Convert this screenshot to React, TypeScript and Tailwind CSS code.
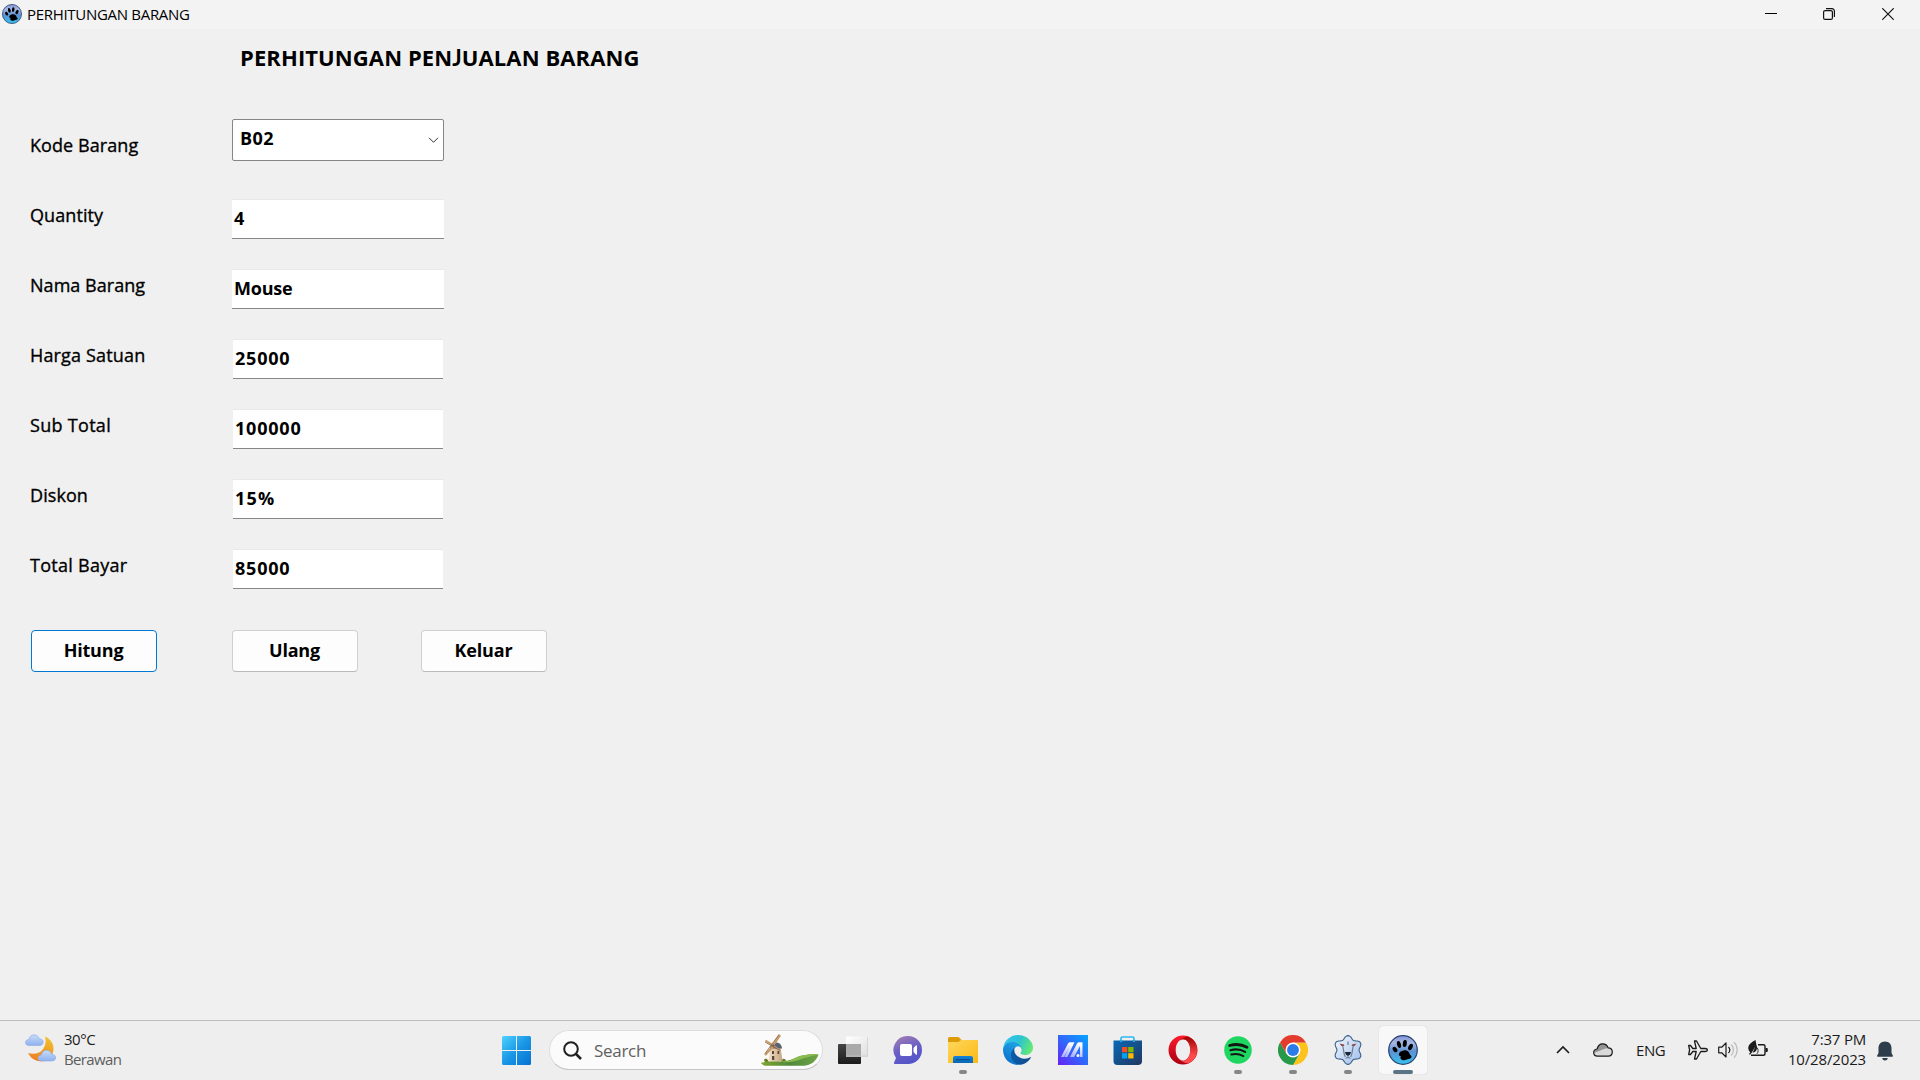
import React from "react";

const WeatherIcon = () => (
  <svg width="32" height="30" viewBox="0 0 32 30">
    <defs>
      <linearGradient id="moon" x1="0.7" y1="0" x2="0.3" y2="1">
        <stop offset="0" stopColor="#f0c02f" />
        <stop offset="1" stopColor="#f07d1f" />
      </linearGradient>
      <linearGradient id="cloud" x1="0" y1="0" x2="0" y2="1">
        <stop offset="0" stopColor="#c9dcfa" />
        <stop offset="1" stopColor="#8fb1ee" />
      </linearGradient>
    </defs>
    <path d="M20 2.500c6 2.500 9.300 8 8.400 14-1 7-7 11.300-13.500 10.800C9.800 27 5.300 23.800 3.200 19c5.500 1.800 11.300.6 14.500-3.500 3.100-3.900 3.600-8.700 2.300-13z" fill="url(#moon)" />
    <path d="M4 11.500C1.800 11.500.5 10.300.5 8.500S2 5.600 3.800 5.500C4.500 2.300 6.500.8 9 .8c2.600 0 4.500 1.500 5.200 4 2.400 0 4 1.300 4 3.300 0 2.200-1.600 3.400-4 3.400z" fill="url(#cloud)" stroke="#86a8e8" strokeWidth=".6" />
    <path d="M16.500 27c-2.200 0-3.500-1.200-3.500-3s1.500-2.900 3.200-3c.8-3.100 2.700-4.700 5.300-4.700 2.700 0 4.500 1.500 5.200 4 2.400 0 4 1.300 4 3.300 0 2.200-1.600 3.400-4 3.400z" fill="url(#cloud)" stroke="#86a8e8" strokeWidth=".6" />
  </svg>
);

const StartIcon = () => (
  <svg width="29" height="29" viewBox="0 0 29 29">
    <defs>
      <linearGradient id="win" gradientUnits="userSpaceOnUse" x1="0" y1="0" x2="29" y2="29">
        <stop offset="0" stopColor="#4fd2ff" />
        <stop offset="0.5" stopColor="#1997e6" />
        <stop offset="1" stopColor="#0671d2" />
      </linearGradient>
    </defs>
    <path d="M1.500 0H14v14H0V1.500A1.500 1.500 0 0 1 1.500 0zM15 0h12.500A1.500 1.500 0 0 1 29 1.500V14H15zM0 15h14v14H1.500A1.500 1.500 0 0 1 0 27.500zM15 15h14v12.500a1.500 1.500 0 0 1-1.500 1.500H15z" fill="url(#win)" />
  </svg>
);

const Windmill = () => (
  <svg width="58" height="32" viewBox="0 0 58 32">
    <defs>
      <linearGradient id="hill" x1="0" y1="0" x2="1" y2="0">
        <stop offset="0" stopColor="#7fa52f" />
        <stop offset="0.5" stopColor="#4f8a3c" />
        <stop offset="1" stopColor="#6fa544" />
      </linearGradient>
      <linearGradient id="tower" x1="0" y1="0" x2="1" y2="0">
        <stop offset="0" stopColor="#f5e3c8" />
        <stop offset="1" stopColor="#c3a480" />
      </linearGradient>
    </defs>
    <path d="M4 28c-2-3 0-4 2-3l2 3M20 28c0-3 4-5 5-1" fill="#657c1c" />
    <path d="M0 29c5-1.500 12-2 20-1.500 8 .3 13-3.500 20-5.700 6-1.700 12-2 17.500-1.300-2 6-7 10.700-14 11.200H4C2 31.500 1 30 0 29z" fill="url(#hill)" />
    <path d="M20 28c9 0 14-4.500 20-6.200 6-1.700 12-2 17.500-1.300-6 1.500-12 2.500-18 5-5 2-12 3-19.500 2.500z" fill="#8bbb4d" />
    <path d="M9.500 13h10L21.500 27.300H7.300z" fill="url(#tower)" />
    <path d="M9 14.500c.4-3.800 2.800-6 6-6 3.300 0 5.700 2 6 6z" fill="#5a6472" />
    <path d="M11 17h2v3h-2zM16.500 17h1.700v3h-1.700zM11 22h2.300v4H11z" fill="#5b4838" />
    <g stroke="#c79a6c" strokeWidth="2.400">
      <path d="M12.500 10.500 19 1" />
      <path d="M12 12.500 4 21" />
      <path d="M11.500 11 4.500 6.500" strokeWidth="2" />
      <path d="m13 12 6.500 4.500" strokeWidth="1.200" />
    </g>
    <path d="M4 19.500 18 .5M4 8l15 8.500" stroke="#8d6038" strokeWidth=".8" />
  </svg>
);

const TaskViewIcon = () => (
  <svg width="30" height="29" viewBox="0 0 30 29">
    <defs>
      <linearGradient id="tvd" x1="0" y1="0" x2="0" y2="1">
        <stop offset="0" stopColor="#444" /><stop offset="1" stopColor="#1b1b1b" />
      </linearGradient>
      <linearGradient id="tvl" x1="0" y1="0" x2="1" y2="1">
        <stop offset="0" stopColor="#fff" /><stop offset="1" stopColor="#dedede" />
      </linearGradient>
    </defs>
    <rect x="0" y="8" width="23" height="20" rx="1" fill="url(#tvd)" />
    <rect x="8" y="0.500" width="22" height="20" rx="1" fill="url(#tvl)" />
    <rect x="8" y="8" width="15" height="12.500" fill="#a9a9a9" />
    <path d="M8 20.200h22M29.700 1v19" stroke="#c9c9c9" strokeWidth=".8" />
  </svg>
);

const ChatIcon = () => (
  <svg width="30" height="30" viewBox="0 0 30 30">
    <defs>
      <linearGradient id="chat" x1="0.200" y1="0" x2="0.600" y2="1">
        <stop offset="0" stopColor="#a07ab4" /><stop offset="0.500" stopColor="#6a60c4" /><stop offset="1" stopColor="#5153cb" />
      </linearGradient>
    </defs>
    <path d="M15 1a14 14 0 1 1 0 28H2c-1 0-1.400-1-.8-1.800L3 23A14 14 0 0 1 15 1z" fill="url(#chat)" />
    <rect x="7" y="9" width="12" height="12" rx="2" fill="#fff" />
    <path d="m20.500 13 2.600-2.700c.3-.3.900-.1.900.4v8.600c0 .5-.6.7-.9.4L20.500 17z" fill="#fff" />
  </svg>
);

const FolderIcon = () => (
  <svg width="30" height="28" viewBox="0 0 30 28">
    <defs>
      <linearGradient id="fold" x1="0" y1="0" x2="1" y2="1">
        <stop offset="0" stopColor="#ffd75e" /><stop offset="1" stopColor="#fcb913" />
      </linearGradient>
      <linearGradient id="foldb" x1="0" y1="0" x2="0" y2="1">
        <stop offset="0" stopColor="#1583d8" /><stop offset="1" stopColor="#0a68b4" />
      </linearGradient>
    </defs>
    <path d="M0 2.500A1.500 1.500 0 0 1 1.500 1h8.300c.6 0 1 .2 1.400.6L13.500 4H28.500A1.500 1.500 0 0 1 30 5.500V9H0z" fill="#dd9d0a" />
    <path d="M0 6h10.500L13 4h15.500A1.500 1.500 0 0 1 30 5.500V27H0z" fill="url(#fold)" />
    <path d="M5 27v-5a2 2 0 0 1 2-2h16a2 2 0 0 1 2 2v5z" fill="url(#foldb)" />
    <path d="M8 23.700h14" stroke="#074c89" strokeWidth="1" />
  </svg>
);

const EdgeIcon = () => (
  <svg width="30" height="30" viewBox="0 0 256 256">
    <defs>
      <linearGradient id="e1" x1="0.200" y1="0.500" x2="1" y2="0.500"><stop offset="0" stopColor="#0c59a4" /><stop offset="1" stopColor="#114a8b" /></linearGradient>
      <linearGradient id="e2" x1="0.600" y1="0.200" x2="0.200" y2="1"><stop offset="0" stopColor="#1b9de2" /><stop offset="0.500" stopColor="#1384d5" /><stop offset="1" stopColor="#0b6ac5" /></linearGradient>
      <linearGradient id="e3" x1="0" y1="0.300" x2="1" y2="0.600"><stop offset="0" stopColor="#35c1f1" /><stop offset="0.500" stopColor="#2cc3d3" /><stop offset="1" stopColor="#66eb6e" /></linearGradient>
    </defs>
    <path d="M231 190.500c-3.400 1.800-6.900 3.300-10.500 4.700a101.900 101.900 0 0 1-35.900 6.400c-47.300 0-88.500-32.500-88.500-74.300 0-11.400 6.400-21.900 16.700-27.200-42.800 1.800-53.800 46.400-53.800 72.500 0 73.900 68.100 81.400 82.800 81.400 7.900 0 19.800-2.300 27-4.600l1.300-.4a128.300 128.300 0 0 0 66.600-52.800 4 4 0 0 0-5.700-5.700z" fill="url(#e1)" />
    <path d="M105.700 241.400a79.200 79.200 0 0 1-22.700-21.300 80.700 80.700 0 0 1 29.800-120c3.100-1.500 8.400-4.100 15.500-4a32.400 32.400 0 0 1 25.700 13 31.900 31.900 0 0 1 6.300 18.700c0-.2 24.500-79.600-80-79.600-43.900 0-80 41.700-80 78.200a130.200 130.200 0 0 0 12.100 56 128 128 0 0 0 156.400 67 75.500 75.500 0 0 1-63.100-8z" fill="url(#e2)" />
    <path d="M152.300 148.900c-.8 1-3.300 2.500-3.300 5.700 0 2.600 1.700 5.100 4.700 7.300 14.400 10 41.500 8.700 41.600 8.700a59.600 59.600 0 0 0 30.300-8.300A61.400 61.400 0 0 0 256 109.200c.3-22.400-8-37.300-11.300-43.900C223.500 23.900 177.700 0 128 0A128 128 0 0 0 0 126.200c.5-36.500 36.800-66 80-66 3.500 0 23.500.3 42 10a72.600 72.600 0 0 1 30.900 29.300c6.100 10.600 7.200 24.100 7.200 29.500s-2.700 13.300-7.800 19.900z" fill="url(#e3)" />
  </svg>
);

const ArmouryIcon = () => (
  <svg width="30" height="30" viewBox="0 0 30 30">
    <defs>
      <linearGradient id="ma" x1="0" y1="1" x2="1" y2="0">
        <stop offset="0" stopColor="#6a1ff5" /><stop offset="0.500" stopColor="#3068fb" /><stop offset="1" stopColor="#04a6ff" />
      </linearGradient>
      <linearGradient id="mb" x1="0" y1="1" x2="0.300" y2="0">
        <stop offset="0" stopColor="#9fa9ff" /><stop offset="1" stopColor="#fff" />
      </linearGradient>
    </defs>
    <path d="M0 0h30v30H0z" fill="url(#ma)" />
    <path d="M3 22 10 8.500q.8-1.300 2-1.300H16.500L9.300 22H6.500L12.500 9.500 6 22z" fill="url(#mb)" />
    <path d="m12 22 7-13.500q.7-1.300 2-1.300H24.500V22H22V11L16 22z" fill="url(#mb)" />
    <circle cx="20" cy="20.500" r="1.500" fill="#fff" />
  </svg>
);

const StoreIcon = () => (
  <svg width="30" height="30" viewBox="0 0 30 30">
    <defs>
      <linearGradient id="st" x1="0" y1="0" x2="1" y2="1">
        <stop offset="0" stopColor="#0a69b7" /><stop offset="1" stopColor="#21375f" />
      </linearGradient>
    </defs>
    <path d="M8 7V3.500A1.500 1.500 0 0 1 9.500 2h10A1.500 1.500 0 0 1 21 3.500V7" fill="none" stroke="#2cb9ee" strokeWidth="1.700" />
    <path d="M.5 5.500h28.500V26a4 4 0 0 1-4 4h-20.500a4 4 0 0 1-4-4z" fill="url(#st)" />
    <path d="M8 5.500V7M21 5.500V7" stroke="#2cb9ee" strokeWidth="1.700" />
    <path d="M9 12h5.300v5.300H9z" fill="#f25022" /><path d="M15.200 12h5.300v5.300h-5.300z" fill="#7fba00" />
    <path d="M9 18.200h5.300v5.300H9z" fill="#00a4ef" /><path d="M15.200 18.200h5.300v5.300h-5.300z" fill="#ffb900" />
  </svg>
);

const OperaIcon = () => (
  <svg width="30" height="30" viewBox="0 0 30 30">
    <defs>
      <linearGradient id="o1" x1="0" y1="0" x2="0" y2="1"><stop offset="0" stopColor="#ff1b2d" /><stop offset="1" stopColor="#a70014" /></linearGradient>
      <linearGradient id="o2" x1="0" y1="0" x2="0" y2="1"><stop offset="0" stopColor="#9c0000" /><stop offset="0.700" stopColor="#ff4b4b" /></linearGradient>
    </defs>
    <path fillRule="evenodd" d="M15 .5a14.500 14.500 0 1 0 0 29 14.500 14.500 0 1 0 0-29zm0 3.800c4.100 0 7.300 4.800 7.300 10.700S19.100 25.700 15 25.700 7.700 20.900 7.700 15 10.900 4.300 15 4.300z" fill="url(#o1)" />
    <path d="M10.500 6.700C12.200 4.200 15.500 2.200 20 1.500a14.500 14.500 0 0 1 0 27c-4.500-.7-7.800-2.700-9.500-5.200 1.300 1.500 2.900 2.400 4.500 2.400 4.100 0 7.300-4.800 7.300-10.700S19.100 4.300 15 4.300c-1.600 0-3.200.9-4.500 2.400z" fill="url(#o2)" />
  </svg>
);

const SpotifyIcon = () => (
  <svg width="28" height="28" viewBox="0 0 28 28">
    <circle cx="14" cy="14" r="13.800" fill="#1ed760" />
    <g fill="none" stroke="#151515" strokeLinecap="round">
      <path d="M5.700 9.500c6-1.700 12.300-1.100 17.300 1.700" strokeWidth="2.800" />
      <path d="M6.500 14.200c5-1.300 10.300-.8 14.600 1.700" strokeWidth="2.200" />
      <path d="M7.200 18.500c4.300-1 8.600-.5 12.300 1.600" strokeWidth="1.800" />
    </g>
  </svg>
);

const ChromeIcon = () => (
  <svg width="30" height="30" viewBox="0 0 48 48">
    <path d="M24 12h20.800A24 24 0 0 1 24 48l10.400-18z" fill="#fdc31a" />
    <path d="M13.600 30 3.200 12A24 24 0 0 0 24 48l10.400-18z" fill="#27994a" />
    <path d="M3.200 12 13.600 30 24 12h20.800A24 24 0 0 0 3.200 12z" fill="#e33b2e" />
    <circle cx="24" cy="24" r="12" fill="#fff" />
    <circle cx="24" cy="24" r="9.500" fill="#2c7bea" />
  </svg>
);

const lobedOutline =
  "M" +
  Array.from({ length: 72 }, (_, i) => {
    const t = (i / 72) * Math.PI * 2;
    const r = 12.700 + 1.700 * Math.cos(6 * t);
    return `${(15 + r * Math.sin(t)).toFixed(2)} ${(15 - r * Math.cos(t)).toFixed(2)}`;
  }).join("L") +
  "Z";

const LazarusIcon = () => (
  <svg width="30" height="30" viewBox="0 0 30 30">
    <defs>
      <linearGradient id="lz" x1="0" y1="0" x2="1" y2="1">
        <stop offset="0" stopColor="#f4f8fd" /><stop offset="1" stopColor="#9dbdea" />
      </linearGradient>
    </defs>
    <path d={lobedOutline} fill="url(#lz)" stroke="#3d6189" strokeWidth="1.100" strokeLinejoin="round" />
    <path d="M9.500 10.500c1.500 3 .5 7 2.800 11.500M20.500 10.500c-1.500 3-.5 7-2.800 11.500" fill="none" stroke="#6d7f98" strokeWidth="1.200" />
    <path d="m6.500 8.500 4.500 1 .3 1.600-2.800-.2zM23.500 8.500l-4.500 1-.3 1.600 2.800-.2z" fill="#8a4b44" />
    <path d="M15 6.500v3.500" stroke="#7c8ba0" strokeWidth="1.500" />
    <path d="M12 17h6l-.8 2.600-2.200 1.400-2.200-1.400z" fill="#1c2530" />
    <path d="M15 21v1.500M12.500 23.300c1.500-.8 3.500-.8 5 0" stroke="#4a5a70" strokeWidth=".8" fill="none" />
  </svg>
);

const PawIcon = ({ size, id }: { size: number; id: string }) => (
  <svg width={size} height={size} viewBox="0 0 30 30">
    <defs>
      <linearGradient id={id} x1="0" y1="0" x2="0" y2="1">
        <stop offset="0" stopColor="#7f93d4" /><stop offset="0.250" stopColor="#a9b9e4" />
        <stop offset="0.550" stopColor="#5c92d2" /><stop offset="1" stopColor="#36c3f0" />
      </linearGradient>
    </defs>
    <circle cx="15" cy="15" r="14.300" fill={`url(#${id})`} stroke="#27406f" strokeWidth="1.200" />
    <ellipse cx="7" cy="14.500" rx="2" ry="3" transform="rotate(-35 7 14.500)" />
    <ellipse cx="11" cy="9.500" rx="2" ry="3.500" transform="rotate(-15 11 9.500)" />
    <ellipse cx="16.800" cy="8.500" rx="2" ry="3.500" transform="rotate(8 16.800 8.500)" />
    <ellipse cx="22.500" cy="12" rx="2" ry="3.400" transform="rotate(28 22.500 12)" />
    <path d="M15.500 15.500c3-.8 5.300.8 6 3.200.6 1.500 2.500 2 2 3.600-.6 1.800-3 1.500-4.700 2.100-2 .8-3.500 1.300-5 .3-1.700-1.200-1.800-2-.8-3.400-1.700-.3-2.600-1.200-2-2.800.7-1.500 2.700-2.600 4.500-3z" />
  </svg>
);

const fields = [
  { label: "Quantity", value: "4", wide: true, lt: "tracking-[0.080px]", vt: "" },
  { label: "Nama Barang", value: "Mouse", wide: true, lt: "tracking-[0.040px]", vt: "tracking-[-0.200px]" },
  { label: "Harga Satuan", value: "25000", wide: false, lt: "tracking-[0.160px]", vt: "tracking-[0.800px]" },
  { label: "Sub Total", value: "100000", wide: false, lt: "tracking-[0.300px]", vt: "tracking-[0.800px]" },
  { label: "Diskon", value: "15%", wide: false, lt: "tracking-[0.080px]", vt: "tracking-[1.200px]" },
  { label: "Total Bayar", value: "85000", wide: false, lt: "tracking-[0.280px]", vt: "tracking-[0.800px]" },
];

const label = "w-[202px] shrink-0 text-[18px] leading-6 [-webkit-text-stroke:0.35px_#000]";

const apps: { icon: React.ReactNode; dot?: boolean; active?: boolean }[] = [
  { icon: <TaskViewIcon /> },
  { icon: <ChatIcon /> },
  { icon: <FolderIcon />, dot: true },
  { icon: <EdgeIcon /> },
  { icon: <ArmouryIcon /> },
  { icon: <StoreIcon /> },
  { icon: <OperaIcon /> },
  { icon: <SpotifyIcon />, dot: true },
  { icon: <ChromeIcon />, dot: true },
  { icon: <LazarusIcon />, dot: true },
  { icon: <PawIcon size={30} id="paw-lg" />, active: true },
];

function TitleBar() {
  return (
    <header className="flex h-[29px] items-start bg-[#f3f3f3]">
      <div className="flex h-[28px] items-center pl-[2px]">
        <PawIcon size={20} id="paw-sm" />
        <span className="ml-[5px] pb-px text-[15px] leading-5 tracking-[-0.300px]">PERHITUNGAN BARANG</span>
      </div>
      <div className="ml-auto flex h-[28px] items-center pr-[26px]">
        <svg width="12" height="12" viewBox="0 0 12 12"><path d="M0 5.500h12" stroke="#000" strokeWidth="1" /></svg>
        <svg className="ml-[46px]" width="12" height="12" viewBox="0 0 12 12" fill="none" stroke="#111">
          <rect x="0.600" y="2.600" width="8.800" height="8.800" rx="1.500" strokeWidth="1.200" />
          <path d="M3 .6h6a2.400 2.400 0 0 1 2.400 2.400v6" strokeWidth="1.200" />
        </svg>
        <svg className="ml-[47px]" width="12" height="12" viewBox="0 0 12 12"><path d="m.3.3 11.400 11.400M11.700.3.3 11.700" stroke="#111" strokeWidth="1.200" /></svg>
      </div>
    </header>
  );
}

function Form() {
  return (
    <main className="flex-1 bg-[#f0f0f0] text-black">
      <h1 className="h-[90px] pt-[13px] pl-[240px] text-[22px] leading-[30px] font-bold tracking-[0.100px] whitespace-nowrap">
        PERHITUNGAN PEN<span className="[font-family:Lato]">J</span>UALAN BARANG
      </h1>
      <div className="flex h-[80px] items-start pl-[30px]">
        <div className={`${label} pt-[14px] tracking-[0.080px]`}>Kode Barang</div>
        <div className="flex h-[42px] w-[212px] items-start justify-between rounded-[2px] border border-[#868686] bg-white pr-[4px] pl-[7px]">
          <span className="pt-[6px] text-[18px] leading-6 font-bold tracking-[0.400px]">B02</span>
          <svg className="mt-[17px]" width="11" height="7" viewBox="0 0 11 7" fill="none"><path d="m1 .8 4.500 4.500L10 .8" stroke="#333" strokeWidth="1" /></svg>
        </div>
      </div>
      {fields.map((f) => (
        <div key={f.label} className="flex h-[70px] items-start pl-[30px]">
          <div className={`${label} ${f.lt} pt-[4px]`}>{f.label}</div>
          <div
            className={`h-[40px] border-t border-b border-t-[#e8e8e8] border-b-[#868686] bg-white pt-[6px] pl-[2px] text-[18px] leading-6 font-bold ${f.wide ? "w-[212px]" : "ml-px w-[210px]"} ${f.vt}`}
          >
            {f.value}
          </div>
        </div>
      ))}
      <div className="mt-[11px] flex pl-[31px] text-[18px] leading-6 font-bold">
        <button className="h-[42px] w-[126px] rounded-[4px] border border-[#0078d4] bg-[#fdfdfd] pr-px pb-[2px] tracking-[-0.200px]">Hitung</button>
        <button className="ml-[75px] h-[42px] w-[126px] rounded-[4px] border border-[#d0d0d0] border-b-[#bababa] bg-[#fdfdfd] pr-px pb-[2px] tracking-[-0.200px]">Ulang</button>
        <button className="ml-[63px] h-[42px] w-[126px] rounded-[4px] border border-[#d0d0d0] border-b-[#bababa] bg-[#fdfdfd] pr-px pb-[2px] tracking-[-0.200px]">Keluar</button>
      </div>
    </main>
  );
}

function Tray() {
  return (
    <div className="ml-auto flex h-full items-center text-[#1b1b1b]">
      <svg className="-mt-px" width="14" height="9" viewBox="0 0 14 9" fill="none"><path d="M1 8l6-6 6 6" stroke="#1b1b1b" strokeWidth="1.600" /></svg>
      <svg className="-mt-px ml-[23px]" width="20" height="14" viewBox="0 0 20 14">
        <path d="M4.500 13.200C2.200 13.200.7 11.600.7 9.600s1.500-3.400 3.400-3.600C4.800 2.800 6.800.8 9.700.8c2.600 0 4.600 1.600 5.400 4 2.500.1 4.200 1.800 4.200 4.200s-1.700 4.200-4.100 4.200z" fill="#d9d9d9" />
        <path d="M1 10C1 7.500 2.500 6.200 4.100 6 4.800 2.800 6.800.8 9.700.8c2.600 0 4.600 1.600 5.400 4l-4 1.200z" fill="#949494" />
        <path d="M4.500 13.200C2.200 13.200.7 11.600.7 9.600s1.500-3.400 3.400-3.600C4.800 2.800 6.800.8 9.700.8c2.600 0 4.600 1.600 5.400 4 2.500.1 4.200 1.800 4.200 4.200s-1.700 4.200-4.100 4.200z" fill="none" stroke="#1b1b1b" strokeWidth="1.200" />
      </svg>
      <span className="ml-[23px] w-[30px] text-[15px] leading-5 tracking-[-0.400px]">ENG</span>
      <svg className="ml-[22px]" width="20" height="20" viewBox="0 0 20 20" fill="none" stroke="#1b1b1b" strokeWidth="1.300" strokeLinejoin="round">
        <path d="M.7 5.500h1.800l2.300 3h3.400L6.500 1h2l4.300 7.500H17c1.300 0 2.300.7 2.300 1.500s-1 1.500-2.300 1.500h-4.200L8.500 19h-2l1.700-7.500H4.800l-2.300 3H.7L1.600 10z" />
      </svg>
      <svg className="ml-[10px]" width="20" height="18" viewBox="0 0 20 18" fill="none">
        <path d="M.7 6.200h3L8 2v14l-4.300-4.200h-3z" stroke="#1b1b1b" strokeWidth="1.200" strokeLinejoin="round" />
        <path d="M10.500 6c1.600 1.800 1.600 4.200 0 6" stroke="#1b1b1b" strokeWidth="1.200" />
        <path d="M13.200 3.500c3 3.200 3 7.800 0 11M16 1.200c4.200 4.500 4.200 11 0 15.600" stroke="#bdbdbd" strokeWidth="1.200" />
      </svg>
      <svg className="-mt-[3px] ml-[10px]" width="20" height="18" viewBox="0 0 20 18" fill="none">
        <path d="M10 4.700h5.500A1.500 1.500 0 0 1 17 6.200v7.600a1.500 1.500 0 0 1-1.500 1.500H3" stroke="#1b1b1b" strokeWidth="1.400" />
        <path d="M17.500 8h1.300a1 1 0 0 1 1 1v2a1 1 0 0 1-1 1h-1.300z" fill="#1b1b1b" />
        <path d="M7.500 0C4 1.800 0 4.500.3 8.500c.1 1.500 1 3 2 3.700L1 14l1 .8 2-2.500 3.500-6-2.800 6.500c4.200-.7 5-4.800 3.800-7.500C8 3.800 8 2 7.500 0z" fill="#1b1b1b" />
        <path d="M9 7.500c1.500 2 1.500 4.500 0 6.300" stroke="#1b1b1b" strokeWidth=".9" />
      </svg>
      <div className="-mt-[2px] ml-[20px] flex w-[78px] flex-col items-end text-[15px] leading-5 whitespace-nowrap">
        <span className="tracking-[-0.200px]">7:37 PM</span>
        <span className="tracking-[-0.150px]">10/28/2023</span>
      </div>
      <svg className="mt-px mr-[27px] ml-[11px]" width="16" height="20" viewBox="0 0 16 20" fill="#2d3d4b">
        <path d="M8 .5c3.900 0 6.500 2.800 6.500 6.500v5l1.400 2.800c.2.500-.1 1-.6 1H.7c-.5 0-.8-.5-.6-1L1.500 12V7C1.500 3.300 4.100.5 8 .5zM5.300 17h5.400a2.700 2.400 0 0 1-5.400 0z" />
      </svg>
    </div>
  );
}

function Taskbar() {
  return (
    <footer className="flex h-[60px] items-center border-t border-[#bdbdbd] bg-[#eeeeee] pb-px">
      <div className="flex w-[502px] items-center pl-[25px]">
        <div className="-mt-[3px]"><WeatherIcon /></div>
        <div className="-mt-[2px] ml-[7px] text-[15px] leading-5">
          <div className="tracking-[-0.480px] text-[#1b1b1b]">30°C</div>
          <div className="tracking-[-0.650px] text-[#5d5d5d]">Berawan</div>
        </div>
      </div>
      <StartIcon />
      <div className="ml-[18px] flex h-[40px] w-[274px] items-center rounded-full border border-[#dedede] border-b-[#c4c4c4] bg-[#fbfbfb] pr-[3px] pl-[13px]">
        <svg width="19" height="19" viewBox="0 0 19 19" fill="none" stroke="#1f1f1f">
          <circle cx="8" cy="8" r="6.800" strokeWidth="2" />
          <path d="m13 13 5 5" strokeWidth="2.500" />
        </svg>
        <span className="mt-[2px] ml-[12px] text-[17px] leading-6 tracking-[-0.300px] text-[#606060]">Search</span>
        <span className="ml-auto"><Windmill /></span>
      </div>
      <div className="ml-[6px] flex gap-[7px]">
        {apps.map((a, i) => (
          <div
            key={i}
            className={`flex h-[48px] w-[48px] flex-col items-center rounded-[4px] ${a.active ? "bg-[#f8f8f8] shadow-[0_0_1px_#bbb]" : ""}`}
          >
            <div className="flex h-[44px] items-center pt-[4px]">{a.icon}</div>
            {a.dot && <div className="h-[4px] w-[8px] rounded-full bg-[#868686]" />}
            {a.active && <div className="h-[4px] w-[20px] rounded-full bg-[#5b7485]" />}
          </div>
        ))}
      </div>
      <Tray />
    </footer>
  );
}

export default function App() {
  return (
    <div className="flex h-[1080px] w-[1920px] flex-col overflow-hidden bg-[#f0f0f0] [font-family:'Open_Sans','Noto_Sans',sans-serif]">
      <TitleBar />
      <Form />
      <Taskbar />
    </div>
  );
}
